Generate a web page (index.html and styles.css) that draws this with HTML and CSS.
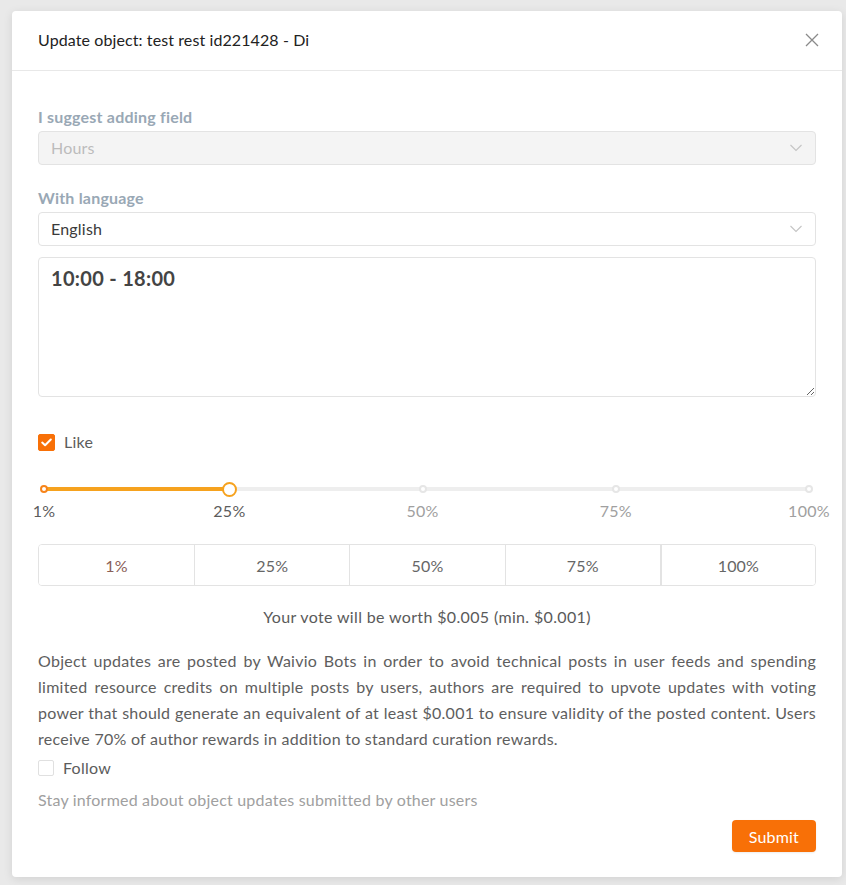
FILE: index.html
```html
<!DOCTYPE html>
<html lang="en">
<head>
<meta charset="utf-8">
<title>Update object</title>
<link rel="stylesheet" href="styles.css">
</head>
<body>
<div class="modal">
  <div class="modal-header">
    <div class="modal-title">Update object: test rest id221428 - Di</div>
    <button class="close" aria-label="Close">
      <svg width="14" height="14" viewBox="0 0 14 14"><path d="M1 1L13 13M13 1L1 13" stroke="#8a8a8a" stroke-width="1.3" fill="none"/></svg>
    </button>
  </div>
  <div class="modal-body">
    <div class="field-label">I suggest adding field</div>
    <div class="select disabled">
      <span class="select-value">Hours</span>
      <svg class="chevron" width="12" height="8" viewBox="0 0 12 8"><path d="M0.5 1L6 6.5L11.5 1" stroke="#c4c4c4" stroke-width="1.1" fill="none"/></svg>
    </div>
    <div class="field-label second">With language</div>
    <div class="select">
      <span class="select-value">English</span>
      <svg class="chevron" width="12" height="8" viewBox="0 0 12 8"><path d="M0.5 1L6 6.5L11.5 1" stroke="#c4c4c4" stroke-width="1.1" fill="none"/></svg>
    </div>
    <textarea class="textarea">10:00 - 18:00</textarea>

    <div class="check-row like">
      <span class="checkbox checked">
        <svg width="11" height="9" viewBox="0 0 11 9"><path d="M1.2 4.6L4.1 7.3L9.8 1.5" stroke="#fff" stroke-width="2" fill="none" stroke-linecap="round" stroke-linejoin="round"/></svg>
      </span>
      <span class="check-label">Like</span>
    </div>

    <div class="slider">
      <div class="rail">
        <div class="track"></div>
        <div class="fill" style="width:24.24%"></div>
        <span class="dot active" style="left:0%"></span>
        <span class="dot" style="left:49.49%"></span>
        <span class="dot" style="left:74.75%"></span>
        <span class="dot" style="left:100%"></span>
        <span class="handle" style="left:24.24%"></span>
      </div>
      <div class="marks">
        <span class="mark on" style="left:0%">1%</span>
        <span class="mark on" style="left:24.24%">25%</span>
        <span class="mark" style="left:49.49%">50%</span>
        <span class="mark" style="left:74.75%">75%</span>
        <span class="mark" style="left:100%">100%</span>
      </div>
    </div>

    <div class="segments">
      <button class="segment">1%</button>
      <button class="segment">25%</button>
      <button class="segment">50%</button>
      <button class="segment">75%</button>
      <button class="segment last">100%</button>
    </div>

    <p class="worth">Your vote will be worth $0.005 (min. $0.001)</p>

    <p class="note">Object updates are posted by Waivio Bots in order to avoid technical posts in user feeds and spending limited resource credits on multiple posts by users, authors are required to upvote updates with voting power that should generate an equivalent of at least $0.001 to ensure validity of the posted content. Users receive 70% of author rewards in addition to standard curation rewards.</p>

    <div class="check-row follow">
      <span class="checkbox"></span>
      <span class="check-label">Follow</span>
    </div>
    <p class="hint">Stay informed about object updates submitted by other users</p>

    <div class="actions">
      <button class="submit">Submit</button>
    </div>
  </div>
</div>
</body>
</html>
```

FILE: styles.css
```css
* { box-sizing: border-box; }

html, body {
  margin: 0;
  padding: 0;
}

body {
  background: #e9e9e9;
  font-family: Lato, "Open Sans", "Liberation Sans", sans-serif;
  font-size: 16px;
  color: #555;
  padding: 11px 4px 8px 12px;
  min-height: 885px;
}

.modal {
  width: 830px;
  background: #fff;
  border-radius: 4px;
  box-shadow: 0 2px 10px rgba(0, 0, 0, 0.10);
}

.modal-header {
  display: flex;
  align-items: center;
  justify-content: space-between;
  padding: 18px 26px 19px;
  border-bottom: 1px solid #e8e8e8;
}

.modal-title {
  font-size: 16px;
  line-height: 22px;
  letter-spacing: 0.1px;
  color: #222;
}

.close {
  border: 0;
  background: none;
  padding: 0;
  margin-right: -3px;
  width: 14px;
  height: 14px;
  display: flex;
}

.modal-body {
  padding: 35px 26px 25px;
}

.field-label {
  font-weight: 700;
  font-size: 16px;
  line-height: 22px;
  letter-spacing: 0.2px;
  color: #99a8b5;
  margin-bottom: 3px;
}

.field-label.second {
  margin-top: 22px;
}

.select {
  height: 34px;
  border: 1px solid #e3e3e3;
  border-radius: 4px;
  background: #fff;
  display: flex;
  align-items: center;
  justify-content: space-between;
  padding: 0 13px 0 12px;
}

.select.disabled {
  background: #f4f4f4;
}

.select-value {
  font-size: 16px;
  line-height: 22px;
  letter-spacing: 0.2px;
  color: #3a3a3a;
}

.select.disabled .select-value {
  color: #bcbcbc;
}

.textarea {
  display: block;
  width: 100%;
  height: 140px;
  margin-top: 11px;
  border: 1px solid #e3e3e3;
  border-radius: 4px;
  padding: 6px 12px 7px;
  font-family: Lato, "Open Sans", "Liberation Sans", sans-serif;
  font-weight: 700;
  font-size: 20px;
  line-height: 28px;
  letter-spacing: 0.3px;
  color: #444;
  resize: vertical;
  outline: none;
}

.check-row {
  display: flex;
  align-items: center;
  gap: 9px;
  line-height: 22px;
}

.check-row.like {
  margin-top: 34px;
}

.checkbox {
  width: 17px;
  height: 17px;
  border: 1px solid #dcdcdc;
  border-radius: 2px;
  background: #fff;
  display: flex;
  align-items: center;
  justify-content: center;
}

.checkbox.checked {
  background: #f87007;
  border-color: #f87007;
}

.check-label {
  font-size: 16px;
  letter-spacing: 0.25px;
  color: #5c5c5c;
}

.slider {
  margin-top: 29px;
}

.rail {
  position: relative;
  height: 14px;
  margin: 0 7px 0 6px;
}

.track {
  position: absolute;
  left: 0;
  right: 0;
  top: 5px;
  height: 4px;
  border-radius: 2px;
  background: #eeeeee;
}

.fill {
  position: absolute;
  left: 0;
  top: 5px;
  height: 4px;
  border-radius: 2px;
  background: #f6a21e;
}

.dot {
  position: absolute;
  top: 3px;
  width: 8px;
  height: 8px;
  margin-left: -4px;
  border: 2px solid #e6e6e6;
  border-radius: 50%;
  background: #fff;
}

.dot.active {
  border-color: #f7841a;
}

.handle {
  position: absolute;
  top: 0;
  width: 15px;
  height: 15px;
  margin-left: -7.5px;
  margin-top: -0.5px;
  border: 2px solid #f6a21e;
  border-radius: 50%;
  background: #fff;
}

.marks {
  position: relative;
  height: 20px;
  margin: 5px 7px 0 6px;
}

.mark {
  position: absolute;
  top: 0;
  transform: translateX(-50%);
  font-size: 16px;
  line-height: 20px;
  letter-spacing: 0.3px;
  color: #a0a0a0;
  white-space: nowrap;
}

.mark.on {
  color: #5c5c5c;
}

.segments {
  display: grid;
  grid-template-columns: repeat(5, 1fr);
  height: 42px;
  margin-top: 23px;
  border: 1px solid #e3e3e3;
  border-radius: 4px;
  overflow: hidden;
}

.segment {
  border: 0;
  border-left: 1px solid #e3e3e3;
  background: #fff;
  font-family: Lato, "Open Sans", "Liberation Sans", sans-serif;
  font-size: 16px;
  letter-spacing: 0.2px;
  color: #666;
  padding: 0;
}

.segment:first-child {
  border-left: 0;
  color: #8a6058;
}

.segment.last {
  border-left: 2px solid #e3e3e3;
}

.worth {
  margin: 20px 0 0;
  text-align: center;
  line-height: 22px;
  letter-spacing: 0.35px;
  color: #5a5a5a;
}

.note {
  margin: 20px 0 0;
  text-align: justify;
  line-height: 26px;
  letter-spacing: 0.26px;
  color: #5e5e5e;
}

.check-row.follow {
  margin-top: 5px;
}

.check-row.follow .checkbox {
  width: 16px;
  height: 16px;
  border-color: #e0e0e0;
}

.hint {
  margin: 10px 0 0;
  line-height: 22px;
  letter-spacing: 0.2px;
  color: #a0a0a0;
}

.actions {
  display: flex;
  justify-content: flex-end;
  margin-top: 9px;
}

.submit {
  height: 32px;
  padding: 0 17px;
  border: 0;
  border-radius: 4px;
  background: #f87007;
  color: #fff;
  font-family: Lato, "Open Sans", "Liberation Sans", sans-serif;
  font-size: 16px;
  letter-spacing: 0.2px;
  box-shadow: 0 1px 2px rgba(0, 0, 0, 0.08);
}
```
